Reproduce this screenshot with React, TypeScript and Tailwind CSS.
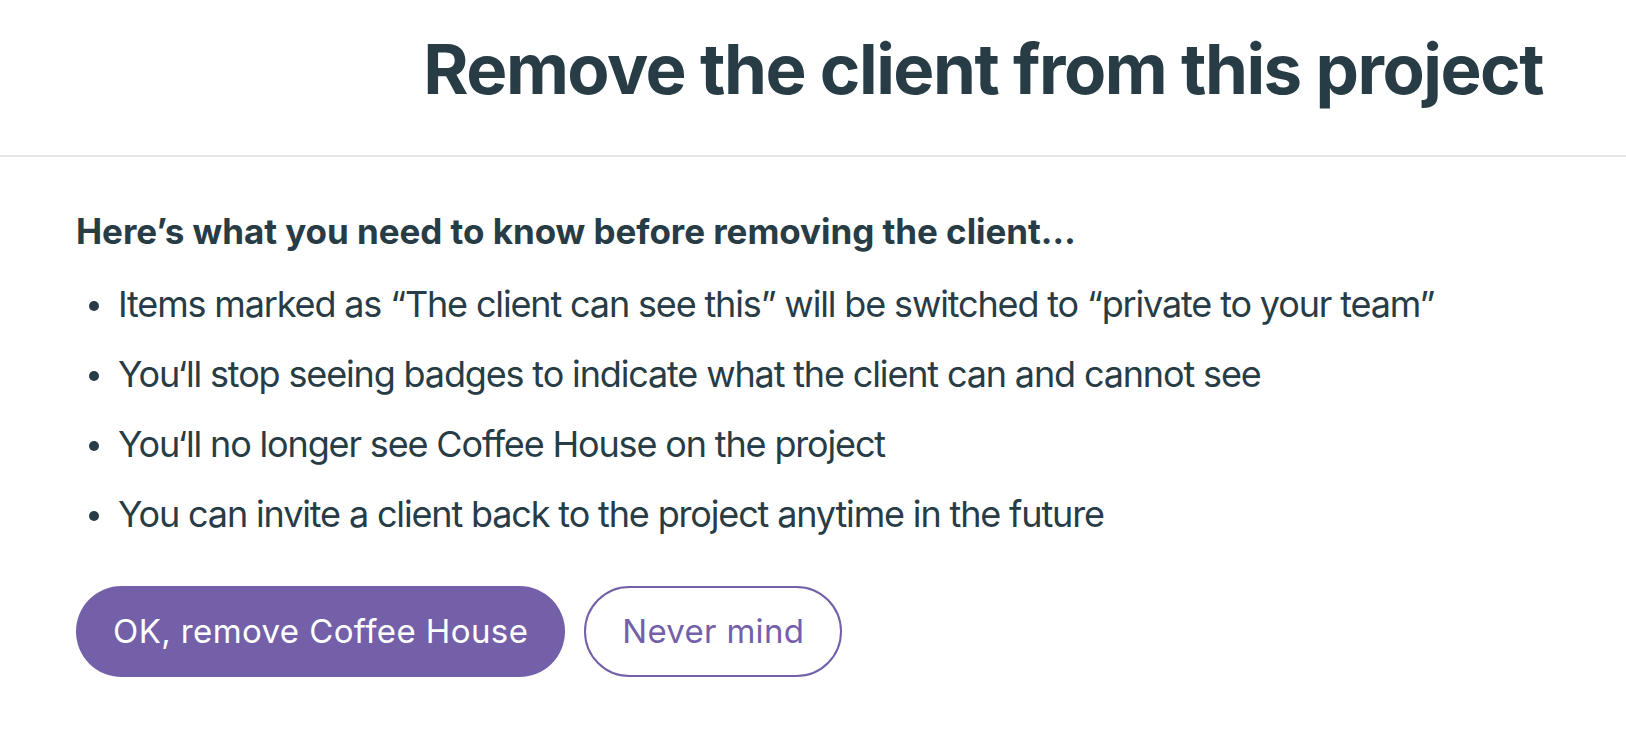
import React from "react";

const items = [
  "Items marked as \u201CThe client can see this\u201D will be switched to \u201Cprivate to your team\u201D",
  "You\u2018ll stop seeing badges to indicate what the client can and cannot see",
  "You\u2018ll no longer see Coffee House on the project",
  "You can invite a client back to the project anytime in the future",
];

export default function App() {
  return (
    <div
      className="w-[1626px] h-[752px] bg-white text-[#283c46] overflow-hidden"
      style={{ fontFamily: "Inter, 'Noto Sans', sans-serif" }}
    >
      <header className="flex justify-end pr-[83px] pt-[29px] pb-[46px] border-b-2 border-[#e8e5e2]">
        <h1 className="text-[69px] leading-[80px] font-bold tracking-[-1.5px]">
          Remove the client from this project
        </h1>
      </header>
      <main className="pl-[76px] pt-[52px]">
        <h2 className="text-[35px] leading-[44px] font-bold tracking-[-0.05px]">
          Here’s what you need to know before removing the client…
        </h2>
        <ul className="mt-[16px] flex flex-col">
          {items.map((t) => (
            <li key={t} className="flex items-start h-[70px]">
              <span className="mt-[32px] ml-[13px] w-[10px] h-[10px] rounded-full bg-[#283c46] shrink-0" />
              <span className="ml-[19px] text-[36px] leading-[70px] tracking-[-1.15px] whitespace-nowrap">{t}</span>
            </li>
          ))}
        </ul>
        <div className="mt-[37px] flex gap-[19px]">
          <button className="h-[91px] px-[37px] rounded-full bg-[#7360a9] text-white text-[33px] tracking-[0.4px]">
            OK, remove Coffee House
          </button>
          <button className="h-[91px] px-[36px] rounded-full border-2 border-[#7360a9] text-[#7360a9] bg-white text-[33px] tracking-[0.3px]">
            Never mind
          </button>
        </div>
      </main>
    </div>
  );
}
